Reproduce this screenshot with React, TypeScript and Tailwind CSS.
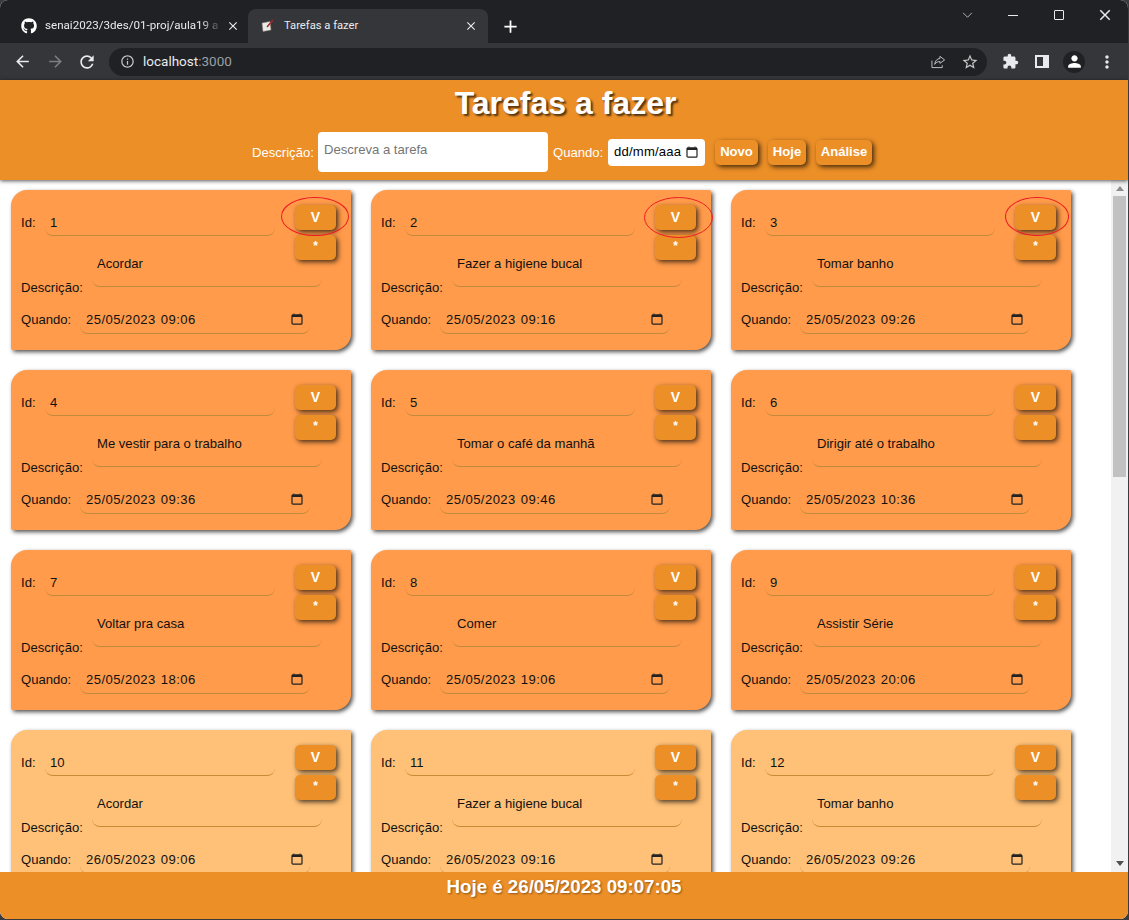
import { FaGithub } from 'react-icons/fa';
import {
  MdArrowBack,
  MdArrowForward,
  MdClose,
  MdExtension,
  MdInfoOutline,
  MdMoreVert,
  MdPerson,
  MdRefresh,
  MdStarBorder,
  MdAdd,
} from 'react-icons/md';

type Task = { id: number; descricao: string; quando: string; ring?: string };

const tasks: Task[] = [
  { id: 1, descricao: 'Acordar', quando: '25/05/2023 09:06', ring: 'left-[270px] top-[7px] w-[68px] h-[39px]' },
  { id: 2, descricao: 'Fazer a higiene bucal', quando: '25/05/2023 09:16', ring: 'left-[273px] top-[7px] w-[69px] h-[41px]' },
  { id: 3, descricao: 'Tomar banho', quando: '25/05/2023 09:26', ring: 'left-[274px] top-[7px] w-[64px] h-[39px]' },
  { id: 4, descricao: 'Me vestir para o trabalho', quando: '25/05/2023 09:36' },
  { id: 5, descricao: 'Tomar o café da manhã', quando: '25/05/2023 09:46' },
  { id: 6, descricao: 'Dirigir até o trabalho', quando: '25/05/2023 10:36' },
  { id: 7, descricao: 'Voltar pra casa', quando: '25/05/2023 18:06' },
  { id: 8, descricao: 'Comer', quando: '25/05/2023 19:06' },
  { id: 9, descricao: 'Assistir Série', quando: '25/05/2023 20:06' },
  { id: 10, descricao: 'Acordar', quando: '26/05/2023 09:06' },
  { id: 11, descricao: 'Fazer a higiene bucal', quando: '26/05/2023 09:16' },
  { id: 12, descricao: 'Tomar banho', quando: '26/05/2023 09:26' },
];

function CalendarIcon({ className }: { className: string }) {
  return (
    <svg viewBox="0 0 12 12" className={className} fill="none">
      <path d="M1 1.500h10V4H1z" fill="currentColor" />
      <path d="M3 .5v1M9 .5v1" stroke="currentColor" />
      <rect x="1" y="2" width="10" height="9.200" rx="1" stroke="currentColor" strokeWidth="1.200" />
    </svg>
  );
}

function ActionButton({ label, className }: { label: string; className?: string }) {
  return (
    <button
      className={`h-[25px] rounded-[5px] bg-[#ec8f27] font-bold leading-none text-white shadow-[2px_2px_5px_#000000b8] ${className ?? ''}`}
    >
      {label}
    </button>
  );
}

function TaskCard({ task }: { task: Task }) {
  const line = task.id > 9 ? 'border-[#c98a36]' : 'border-[#bf8a3c]';
  const bg = task.id > 9 ? 'bg-[#ffc177]' : 'bg-[#ff9b4a]';

  return (
    <div
      className={`relative h-[160px] w-[340px] rounded-tl-[16px] rounded-br-[16px] rounded-tr-[2px] rounded-bl-[2px] pl-[10px] pt-[15px] text-[13.1px] text-[#111] shadow-[2px_2px_4px_#000000b0] ${bg}`}
    >
      <div className="flex h-[31px] items-center">
        <span className="w-[24px] pt-[5px]">Id:</span>
        <div className={`flex h-full w-[230px] items-center rounded-b-lg border-b pl-[5px] pt-[5px] ${line}`}>{task.id}</div>
      </div>

      <div className="mt-[10px] flex h-[41px] items-end">
        <span className="-mb-[11px] w-[71px] leading-5">Descrição:</span>
        <div className={`h-full w-[230px] rounded-b-lg border-b pl-[5px] pt-[8px] leading-5 ${line}`}>{task.descricao}</div>
      </div>

      <div className="mt-[18px] flex h-[29px] items-center">
        <span className="w-[59px]">Quando:</span>
        <div className={`flex h-full w-[230px] items-center justify-between rounded-b-lg border-b pl-[6px] pr-[7px] ${line}`}>
          <span className="pt-[1px] tracking-[0.42px] [word-spacing:1px]">{task.quando}</span>
          <CalendarIcon className="h-[12px] w-[12px] text-[#222]" />
        </div>
      </div>

      <div className="absolute right-[15px] top-[15px] flex w-[41px] flex-col gap-[5px]">
        <ActionButton label="V" className="pb-[2px] text-[14px]" />
        <ActionButton label="*" className="pb-[4px] text-[12px]" />
      </div>

      {task.ring && (
        <svg className={`absolute ${task.ring}`} viewBox="0 0 68 40" preserveAspectRatio="none" fill="none">
          <ellipse cx="34" cy="20" rx="33.500" ry="19.500" stroke="#ed1c24" strokeWidth="1" vectorEffect="non-scaling-stroke" />
        </svg>
      )}
    </div>
  );
}

function Notepad() {
  return (
    <svg viewBox="0 0 14 14" className="h-[14px] w-[14px] shrink-0">
      <path d="M1 4l8-1.500 1 8.500-8 1.500z" fill="#eceae6" stroke="#8b8377" strokeWidth=".5" />
      <path d="M6 8l6-7" stroke="#a5262a" strokeWidth="1.500" />
    </svg>
  );
}

function BrowserChrome() {
  return (
    <div className="[font-family:'Roboto',sans-serif] text-[#e8eaed]">
      <div className="flex h-[43px] items-end bg-[#202124] pl-[10px]">
        <div className="flex h-[34px] w-[238px] items-center pl-[11px] pr-[8px]">
          <FaGithub className="h-[16px] w-[16px] shrink-0 text-white" />
          <span className="ml-[8px] whitespace-nowrap text-[11.6px] [mask-image:linear-gradient(90deg,#000_90%,#0003)]">
            senai2023/3des/01-proj/aula19 a
          </span>
          <MdClose className="ml-auto h-[14px] w-[14px] shrink-0" />
        </div>
        <div className="flex h-[34px] w-[240px] items-center rounded-t-lg bg-[#35363a] pl-[13px] pr-[10px]">
          <Notepad />
          <span className="ml-[9px] text-[11.2px]">Tarefas a fazer</span>
          <MdClose className="ml-auto h-[14px] w-[14px]" />
        </div>
        <div className="flex h-[34px] w-[44px] items-center justify-center">
          <MdAdd className="h-[21px] w-[21px] text-white" />
        </div>
        <div className="ml-auto flex h-full items-start">
          <svg viewBox="0 0 12 8" className="mr-[35px] mt-[12px] h-[7px] w-[11px]" fill="none">
            <path d="M1 1l5 5 5-5" stroke="#c4c7c5" />
          </svg>
          <div className="mr-[36px] mt-[15px] h-px w-[10px] bg-[#e8eaed]" />
          <div className="mr-[32px] mt-[10px] h-[10px] w-[10px] rounded-[1px] border border-[#e8eaed]" />
          <MdClose className="mr-[14px] mt-[6px] h-[18px] w-[18px]" />
        </div>
      </div>

      <div className="flex h-[37px] items-center bg-[#35363a] pl-[13px]">
        <MdArrowBack className="h-[19px] w-[19px] text-[#e8eaed]" />
        <MdArrowForward className="ml-[14px] h-[19px] w-[19px] text-[#7c7e82]" />
        <MdRefresh className="ml-[12px] h-[20px] w-[20px]" />
        <div className="ml-[12px] flex h-[28px] w-[878px] items-center rounded-full bg-[#202124] pl-[11px] pr-[8px]">
          <MdInfoOutline className="h-[15px] w-[15px] shrink-0 text-[#c4c7c5]" />
          <span className="ml-[8px] text-[13.5px] leading-none">
            localhost<span className="text-[#9aa0a6]">:3000</span>
          </span>
          <svg viewBox="0 0 16 16" className="ml-auto mr-[15px] h-[15px] w-[15px]" fill="none" stroke="#c4c7c5">
            <path d="M1 7v7.500h11V12" />
            <path d="M9.500 2.500l5 3.800-5 3.700V8C7 8 5.300 9 4 11c.2-3.500 2.500-6 5.500-6.200z" />
          </svg>
          <MdStarBorder className="h-[18px] w-[18px] text-[#c4c7c5]" />
        </div>
        <MdExtension className="ml-[15px] h-[17px] w-[17px] text-[#e8eaed]" />
        <div className="ml-[16px] h-[13px] w-[14px] border-[2px] border-r-[6px] border-[#e8eaed]" />
        <div className="ml-[14px] flex h-[22px] w-[22px] items-center justify-center rounded-full bg-[#202124]">
          <MdPerson className="h-[19px] w-[19px] text-white" />
        </div>
        <MdMoreVert className="ml-[12px] h-[20px] w-[20px]" />
      </div>
    </div>
  );
}

function Scrollbar() {
  return (
    <div className="flex w-[17px] shrink-0 flex-col items-center bg-[#f1f1f1]">
      <div className="mt-[6px] h-0 w-0 border-x-[4px] border-b-[5px] border-x-transparent border-b-[#8d8d8d]" />
      <div className="mt-[5px] h-[281px] w-[13px] bg-[#c1c1c1]" />
      <div className="mb-[6px] mt-auto h-0 w-0 border-x-[4px] border-t-[5px] border-x-transparent border-t-[#505050]" />
    </div>
  );
}

export default function App() {
  return (
    <div className="h-[920px] w-[1129px] overflow-hidden bg-[#3a3b3f] [font-family:'Liberation_Sans',Arial,sans-serif]">
      <div className="flex h-[919px] w-[1128px] flex-col overflow-hidden rounded-b-lg rounded-t-lg bg-white">
        <BrowserChrome />

        <header className="relative z-10 h-[100px] bg-[#ec8f27] text-center shadow-[0_1px_4px_#000a]">
          <h1 className="pl-[3px] pt-[5px] text-[32px] font-bold leading-[37px] text-white [text-shadow:2px_2px_2px_#000a]">
            Tarefas a fazer
          </h1>
          <div className="mt-[10px] flex items-center pl-[252px] text-[13.1px] text-white">
            <span className="w-[66px] pt-[2px] text-left">Descrição:</span>
            <div className="h-[40px] w-[230px] rounded-[4px] bg-white pl-[6px] pt-[10px] text-left leading-4 text-[#757575]">
              Descreva a tarefa
            </div>
            <span className="ml-[5px] w-[55px] pt-[2px] text-left">Quando:</span>
            <div className="flex h-[27px] w-[97px] items-center justify-between rounded-[4px] bg-white pl-[6px] pr-[7px] text-black">
              <span className="tracking-[0.2px]">dd/mm/aaa</span>
              <CalendarIcon className="h-[12px] w-[12px] shrink-0 text-[#222]" />
            </div>
            <ActionButton label="Novo" className="ml-[10px] w-[43px]" />
            <ActionButton label="Hoje" className="ml-[10px] w-[38px]" />
            <ActionButton label="Análise" className="ml-[10px] w-[56px]" />
          </div>
        </header>

        <div className="flex min-h-0 flex-1">
          <main className="min-w-0 flex-1 overflow-hidden pl-[11px] pt-[10px]">
            <div className="grid grid-cols-[340px_340px_340px] gap-x-[20px] gap-y-[20px]">
              {tasks.map((task) => (
                <TaskCard key={task.id} task={task} />
              ))}
            </div>
          </main>
          <Scrollbar />
        </div>

        <footer className="relative z-10 h-[47px] bg-[#ec8f27] pt-[4px] text-center text-[18.72px] font-bold leading-[22px] text-white [text-shadow:1px_1px_2px_#0006]">
          Hoje é 26/05/2023 09:07:05
        </footer>
      </div>
    </div>
  );
}
